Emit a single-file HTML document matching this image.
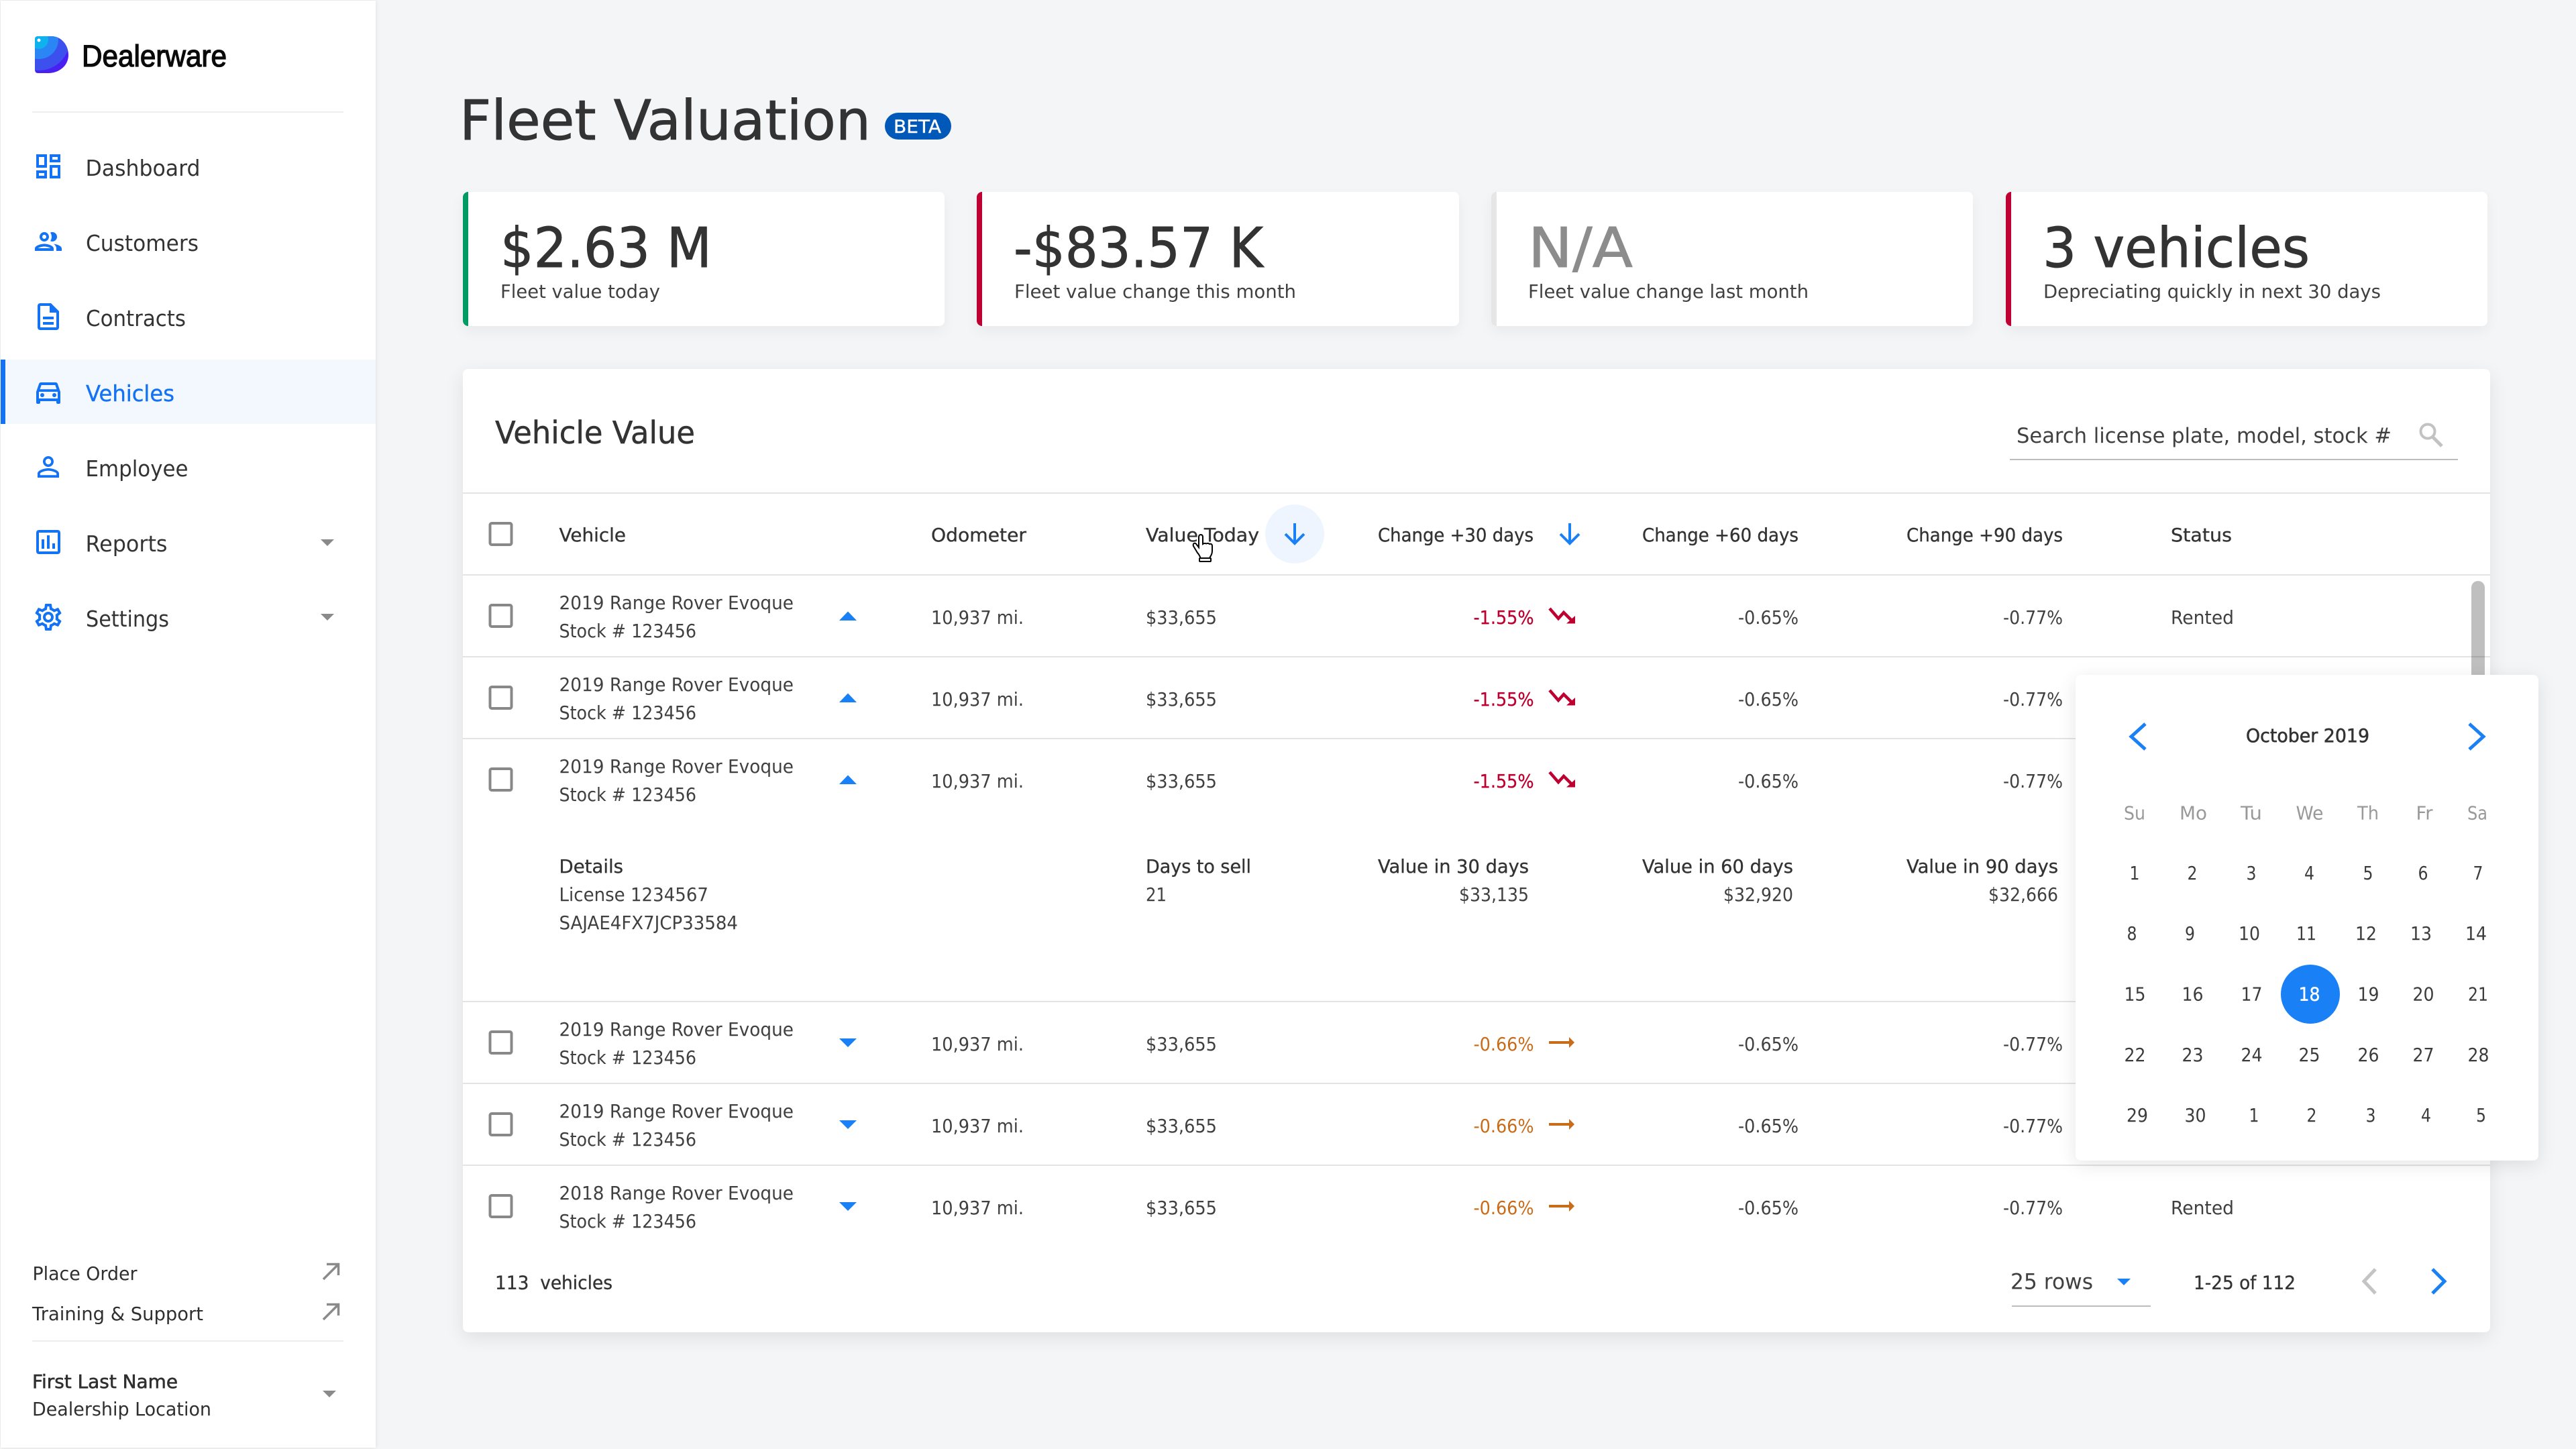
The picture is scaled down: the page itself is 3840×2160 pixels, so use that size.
<!DOCTYPE html>
<html lang="en">
<head>
<meta charset="utf-8">
<title>Fleet Valuation</title>
<style>
html,body{margin:0;padding:0;width:3840px;height:2160px;overflow:hidden;background:#f4f5f7}
.box{position:absolute;background:#fff;box-sizing:border-box}
#side{left:1px;top:1px;width:559px;height:2157px;box-shadow:0 0 6px rgba(0,0,0,.10)}
.kpi{top:286px;height:200px;width:718px;border-radius:8px;border-left:8px solid #009a63;box-shadow:0 8px 20px rgba(0,0,0,.05)}
#main{left:690px;top:550px;width:3022px;height:1436px;border-radius:8px;box-shadow:0 8px 28px rgba(0,0,0,.09)}
#cal{left:3094px;top:1006px;width:690px;height:724px;border-radius:8px;box-shadow:0 6px 28px rgba(0,0,0,.10)}
svg{position:absolute;left:0;top:0}
text{font-family:"DejaVu Sans","Liberation Sans",sans-serif;fill:#404040;font-size:28px}
.t{font-size:82px;fill:#333;stroke:#333;stroke-width:.9px}
.nav{font-size:33px;fill:#333}
.h{fill:#333;stroke:#333;stroke-width:.35px}
.sb{fill:#2f2f2f}
.g{fill:#999}
.s{fill:#bd0030;stroke:#bd0030;stroke-width:.3px}
.o{fill:#c96c1a}
.d{font-size:28px;fill:#3c3c3c;text-anchor:middle}
.w{font-size:28px;fill:#999;text-anchor:middle}
</style>
</head>
<body>
<div class="box" id="side"></div>
<div class="box kpi" style="left:690px"></div>
<div class="box kpi" style="left:1456px;width:719px;border-left-color:#bf0033"></div>
<div class="box kpi" style="left:2223px;border-left-color:#e6e6e6"></div>
<div class="box kpi" style="left:2990px;border-left-color:#bf0033"></div>
<div class="box" id="main"></div>

<svg width="3840" height="2160" viewBox="0 0 3840 2160" xmlns="http://www.w3.org/2000/svg">
<defs>
<clipPath id="lg"><path d="M57 54H76C92 54 102 68 102 82C102 98 88 109 72 109H57Q52 109 52 104V59Q52 54 57 54Z"/></clipPath>
<rect id="cb" x="730.5" y="-16" width="32" height="32" rx="2.5" fill="none" stroke="#888" stroke-width="4"/>
<polygon id="up" points="1251,7 1264,-6.5 1277,7" fill="#1a80f6"/>
<polygon id="dn" points="1251,-6 1277,-6 1264,7" fill="#1a80f6"/>
<g id="td" fill="none" stroke="#bd0030"><polyline points="2310,-11 2323,4 2331,-5 2342,6" stroke-width="4.5"/><polygon points="2348,0 2348,11.5 2335,11.5" fill="#bd0030" stroke="none"/></g>
<g id="tr" fill="#c96c1a"><rect x="2309" y="-2" width="31" height="4"/><polygon points="2339,-8 2347,0 2339,8"/></g>
<g id="ne" fill="none" stroke="#8a8a8a" stroke-width="3.5"><path d="M484 24L506 2M489 1.5H506.5V18"/></g>
<g id="car" fill="#8a8a8a"><polygon points="478,0 498,0 488,10"/></g>
</defs>

<!-- logo -->
<g clip-path="url(#lg)">
<rect x="50" y="50" width="56" height="64" fill="#4a1ff2"/>
<circle cx="58" cy="59" r="46" fill="#3c50ee"/>
<circle cx="58" cy="59" r="29" fill="#2a86f5"/>
<circle cx="58" cy="59" r="14" fill="#10b2ee"/>
<circle cx="58" cy="60" r="2.5" fill="#fff"/>
</g>
<text x="122" y="99" style="font-family:'Liberation Sans',sans-serif;font-size:45px;fill:#0a0a0a;stroke:#0a0a0a;stroke-width:1.3px" textLength="216" lengthAdjust="spacingAndGlyphs">Dealerware</text>
<rect x="48" y="166" width="464" height="2" fill="#eee"/>

<!-- nav -->
<rect x="1" y="536" width="559" height="96" fill="#f3f7fe"/>
<rect x="1" y="536" width="7" height="96" fill="#1473f2"/>
<g fill="#1473f2">
<path transform="translate(48,224) scale(2)" d="M19 5v2h-4V5h4M9 5v6H5V5h4m10 8v6h-4v-6h4M9 17v2H5v-2h4M21 3h-8v6h8V3zM11 3H3v10h8V3zm10 8h-8v10h8V11zm-10 4H3v6h8v-6z"/>
<path transform="translate(48,336) scale(2)" d="M9 13.75c-2.34 0-7 1.17-7 3.5V19h14v-1.75c0-2.33-4.66-3.5-7-3.5zM4.34 17c.84-.58 2.87-1.25 4.66-1.25s3.82.67 4.66 1.25H4.34zM9 12c1.93 0 3.5-1.57 3.5-3.5S10.93 5 9 5 5.5 6.57 5.5 8.5 7.07 12 9 12zm0-5c.83 0 1.5.67 1.5 1.5S9.83 10 9 10s-1.5-.67-1.5-1.5S8.17 7 9 7zm7.04 6.81c1.16.84 1.96 1.96 1.96 3.44V19h4v-1.75c0-2.02-3.5-3.17-5.96-3.44zM15 12c1.93 0 3.5-1.57 3.5-3.5S16.93 5 15 5c-.54 0-1.04.13-1.5.35.63.89 1 1.98 1 3.15s-.37 2.26-1 3.15c.46.22.96.35 1.5.35z"/>
<path transform="translate(48,448) scale(2)" d="M8 16h8v2H8zm0-4h8v2H8zm6-10H6c-1.1 0-2 .9-2 2v16c0 1.1.89 2 1.99 2H18c1.1 0 2-.9 2-2V8l-6-6zm4 18H6V4h7v5h5v11z"/>
<g transform="translate(48,560) scale(2)"><path d="M18.92 6.01C18.72 5.42 18.16 5 17.5 5h-11c-.66 0-1.21.42-1.42 1.01L3 12v8c0 .55.45 1 1 1h1c.55 0 1-.45 1-1v-1h12v1c0 .55.45 1 1 1h1c.55 0 1-.45 1-1v-8l-2.08-5.99zM6.85 7h10.29l1.08 3.11H5.77L6.85 7zM19 17H5v-5h14v5z"/><circle cx="7.5" cy="14.5" r="1.5"/><circle cx="16.5" cy="14.5" r="1.5"/></g>
<path transform="translate(48,672) scale(2)" d="M12 5.9c1.16 0 2.1.94 2.1 2.1s-.94 2.1-2.1 2.1S9.9 9.16 9.9 8s.94-2.1 2.1-2.1m0 9c2.97 0 6.1 1.46 6.1 2.1v1.1H5.9V17c0-.64 3.13-2.1 6.1-2.1M12 4C9.79 4 8 5.79 8 8s1.79 4 4 4 4-1.79 4-4-1.79-4-4-4zm0 9c-2.67 0-8 1.34-8 4v3h16v-3c0-2.66-5.33-4-8-4z"/>
<path transform="translate(48,784) scale(2)" d="M19 3H5c-1.1 0-2 .9-2 2v14c0 1.1.9 2 2 2h14c1.1 0 2-.9 2-2V5c0-1.1-.9-2-2-2zm0 16H5V5h14v14zM7 10h2v7H7zm4-3h2v10h-2zm4 6h2v4h-2z"/>
<path transform="translate(48,896) scale(2)" d="M19.43 12.98c.04-.32.07-.64.07-.98 0-.34-.03-.66-.07-.98l2.11-1.65c.19-.15.24-.42.12-.64l-2-3.46c-.09-.16-.26-.25-.44-.25-.06 0-.12.01-.17.03l-2.49 1c-.52-.4-1.08-.73-1.69-.98l-.38-2.65C14.46 2.18 14.25 2 14 2h-4c-.25 0-.46.18-.49.42l-.38 2.65c-.61.25-1.17.59-1.69.98l-2.49-1c-.06-.02-.12-.03-.18-.03-.17 0-.34.09-.43.25l-2 3.46c-.13.22-.07.49.12.64l2.11 1.65c-.04.32-.07.65-.07.98 0 .33.03.66.07.98l-2.11 1.65c-.19.15-.24.42-.12.64l2 3.46c.09.16.26.25.44.25.06 0 .12-.01.17-.03l2.49-1c.52.4 1.08.73 1.69.98l.38 2.65c.03.24.24.42.49.42h4c.25 0 .46-.18.49-.42l.38-2.65c.61-.25 1.17-.59 1.69-.98l2.49 1c.06.02.12.03.18.03.17 0 .34-.09.43-.25l2-3.46c.12-.22.07-.49-.12-.64l-2.11-1.65zm-1.98-1.71c.04.31.05.52.05.73 0 .21-.02.43-.05.73l-.14 1.13.89.7 1.08.84-.7 1.21-1.27-.51-1.04-.42-.9.68c-.43.32-.84.56-1.25.73l-1.06.43-.16 1.13-.2 1.35h-1.4l-.19-1.35-.16-1.13-1.06-.43c-.43-.18-.83-.41-1.23-.71l-.91-.7-1.06.43-1.27.51-.7-1.21 1.08-.84.89-.7-.14-1.13c-.03-.31-.05-.54-.05-.74s.02-.43.05-.73l.14-1.13-.89-.7-1.08-.84.7-1.21 1.27.51 1.04.42.9-.68c.43-.32.84-.56 1.25-.73l1.06-.43.16-1.13.2-1.35h1.39l.19 1.35.16 1.13 1.06.43c.43.18.83.41 1.23.71l.91.7 1.06-.43 1.27-.51.7 1.21-1.07.85-.89.7.14 1.13zM12 8c-2.21 0-4 1.79-4 4s1.79 4 4 4 4-1.79 4-4-1.79-4-4-4zm0 6c-1.1 0-2-.9-2-2s.9-2 2-2 2 .9 2 2-.9 2-2 2z"/>
</g>
<text class="nav" x="127.5" y="262" textLength="171" lengthAdjust="spacingAndGlyphs">Dashboard</text>
<text class="nav" x="128" y="374" textLength="168" lengthAdjust="spacingAndGlyphs">Customers</text>
<text class="nav" x="128" y="486" textLength="149" lengthAdjust="spacingAndGlyphs">Contracts</text>
<text class="nav" x="128" y="598" textLength="132" lengthAdjust="spacingAndGlyphs" style="fill:#1473f2;stroke:#1473f2;stroke-width:.4px">Vehicles</text>
<text class="nav" x="127.5" y="710" textLength="153" lengthAdjust="spacingAndGlyphs">Employee</text>
<text class="nav" x="127.5" y="822" textLength="122" lengthAdjust="spacingAndGlyphs">Reports</text>
<text class="nav" x="128" y="934" textLength="124" lengthAdjust="spacingAndGlyphs">Settings</text>
<use href="#car" y="804"/>
<use href="#car" y="915"/>

<!-- sidebar bottom -->
<text class="sb" x="48.5" y="1908" textLength="156" lengthAdjust="spacingAndGlyphs">Place Order</text>
<text class="sb" x="48" y="1968" textLength="255" lengthAdjust="spacingAndGlyphs">Training &amp; Support</text>
<use href="#ne" x="-2" y="1883"/>
<use href="#ne" x="-2" y="1943"/>
<rect x="48" y="1998" width="464" height="2" fill="#eee"/>
<text class="sb" x="48" y="2069" textLength="217" lengthAdjust="spacingAndGlyphs" style="stroke:#2f2f2f;stroke-width:.6px">First Last Name</text>
<text class="sb" x="48" y="2110" textLength="267" lengthAdjust="spacingAndGlyphs">Dealership Location</text>
<use href="#car" x="3" y="2073"/>

<!-- title -->
<text class="t" x="685" y="208" textLength="613" lengthAdjust="spacingAndGlyphs">Fleet Valuation</text>
<rect x="1319" y="168" width="99" height="40" rx="20" fill="#0058b8"/>
<text x="1332" y="198" textLength="71" lengthAdjust="spacingAndGlyphs" style="font-size:27px;fill:#fff;stroke:#fff;stroke-width:.4px">BETA</text>

<!-- KPI -->
<text class="t" x="746" y="398" textLength="315" lengthAdjust="spacingAndGlyphs">$2.63 M</text>
<text x="746" y="444" textLength="238" lengthAdjust="spacingAndGlyphs">Fleet value today</text>
<text class="t" x="1511" y="398" textLength="372" lengthAdjust="spacingAndGlyphs">-$83.57 K</text>
<text x="1512" y="444" textLength="420" lengthAdjust="spacingAndGlyphs">Fleet value change this month</text>
<text class="t" x="2278" y="398" textLength="156" lengthAdjust="spacingAndGlyphs" style="fill:#8c8c8c;stroke:#8c8c8c">N/A</text>
<text x="2278" y="444" textLength="418" lengthAdjust="spacingAndGlyphs">Fleet value change last month</text>
<text class="t" x="3045" y="398" textLength="398" lengthAdjust="spacingAndGlyphs">3 vehicles</text>
<text x="3046" y="444" textLength="503" lengthAdjust="spacingAndGlyphs">Depreciating quickly in next 30 days</text>

<!-- table head -->
<text x="738" y="661" textLength="298" lengthAdjust="spacingAndGlyphs" style="font-size:46px;fill:#333;stroke:#333;stroke-width:.5px">Vehicle Value</text>
<text x="3006" y="660" textLength="559" lengthAdjust="spacingAndGlyphs" style="font-size:31px">Search license plate, model, stock #</text>
<circle cx="3619" cy="643" r="10.5" fill="none" stroke="#c2c2c2" stroke-width="4"/>
<path d="M3627 652L3640 665" stroke="#c2c2c2" stroke-width="5" fill="none"/>
<rect x="2996" y="684" width="668" height="2" fill="#bdbdbd"/>

<g fill="#e3e3e3">
<rect x="690" y="734" width="3022" height="2"/>
<rect x="690" y="856" width="3022" height="2"/>
<rect x="690" y="978" width="3022" height="2"/>
<rect x="690" y="1100" width="3022" height="2"/>
<rect x="690" y="1492" width="3022" height="2"/>
<rect x="690" y="1614" width="3022" height="2"/>
<rect x="690" y="1736" width="3022" height="2"/>
</g>
<use href="#cb" y="796"/>
<text class="h" x="833.5" y="807" textLength="99.5" lengthAdjust="spacingAndGlyphs">Vehicle</text>
<text class="h" x="1388" y="807" textLength="142" lengthAdjust="spacingAndGlyphs">Odometer</text>
<text class="h" x="1708" y="807" textLength="169" lengthAdjust="spacingAndGlyphs">Value Today</text>
<circle cx="1930" cy="796" r="44" fill="#eef5fe"/>
<path d="M1930 780V810M1916 796L1930 810L1944 796" fill="none" stroke="#1a80f6" stroke-width="4"/>
<text class="h" x="2054" y="807" textLength="232" lengthAdjust="spacingAndGlyphs">Change +30 days</text>
<path d="M2340 780V810M2326 796L2340 810L2354 796" fill="none" stroke="#1a80f6" stroke-width="4"/>
<text class="h" x="2448" y="807" textLength="233" lengthAdjust="spacingAndGlyphs">Change +60 days</text>
<text class="h" x="2842" y="807" textLength="233" lengthAdjust="spacingAndGlyphs">Change +90 days</text>
<text class="h" x="3236" y="807" textLength="91" lengthAdjust="spacingAndGlyphs">Status</text>

<!-- row 1 -->
<use href="#cb" y="918"/><use href="#up" y="918"/><use href="#td" y="918"/>
<text x="833.5" y="908" textLength="349.5" lengthAdjust="spacingAndGlyphs">2019 Range Rover Evoque</text>
<text x="833.5" y="950" textLength="204.5" lengthAdjust="spacingAndGlyphs">Stock # 123456</text>
<text x="1388" y="930" textLength="138" lengthAdjust="spacingAndGlyphs">10,937 mi.</text>
<text x="1708" y="930" textLength="106" lengthAdjust="spacingAndGlyphs">$33,655</text>
<text class="s" x="2196.5" y="930" textLength="90" lengthAdjust="spacingAndGlyphs">-1.55%</text>
<text x="2591" y="930" textLength="90" lengthAdjust="spacingAndGlyphs">-0.65%</text>
<text x="2986" y="930" textLength="89" lengthAdjust="spacingAndGlyphs">-0.77%</text>
<text x="3236" y="930" textLength="94" lengthAdjust="spacingAndGlyphs">Rented</text>
<!-- row 2 -->
<use href="#cb" y="1040"/><use href="#up" y="1040"/><use href="#td" y="1040"/>
<text x="833.5" y="1030" textLength="349.5" lengthAdjust="spacingAndGlyphs">2019 Range Rover Evoque</text>
<text x="833.5" y="1072" textLength="204.5" lengthAdjust="spacingAndGlyphs">Stock # 123456</text>
<text x="1388" y="1052" textLength="138" lengthAdjust="spacingAndGlyphs">10,937 mi.</text>
<text x="1708" y="1052" textLength="106" lengthAdjust="spacingAndGlyphs">$33,655</text>
<text class="s" x="2196.5" y="1052" textLength="90" lengthAdjust="spacingAndGlyphs">-1.55%</text>
<text x="2591" y="1052" textLength="90" lengthAdjust="spacingAndGlyphs">-0.65%</text>
<text x="2986" y="1052" textLength="89" lengthAdjust="spacingAndGlyphs">-0.77%</text>
<!-- row 3 -->
<use href="#cb" y="1162"/><use href="#up" y="1162"/><use href="#td" y="1162"/>
<text x="833.5" y="1152" textLength="349.5" lengthAdjust="spacingAndGlyphs">2019 Range Rover Evoque</text>
<text x="833.5" y="1194" textLength="204.5" lengthAdjust="spacingAndGlyphs">Stock # 123456</text>
<text x="1388" y="1174" textLength="138" lengthAdjust="spacingAndGlyphs">10,937 mi.</text>
<text x="1708" y="1174" textLength="106" lengthAdjust="spacingAndGlyphs">$33,655</text>
<text class="s" x="2196.5" y="1174" textLength="90" lengthAdjust="spacingAndGlyphs">-1.55%</text>
<text x="2591" y="1174" textLength="90" lengthAdjust="spacingAndGlyphs">-0.65%</text>
<text x="2986" y="1174" textLength="89" lengthAdjust="spacingAndGlyphs">-0.77%</text>
<!-- details -->
<text class="h" x="833.5" y="1301" textLength="95.5" lengthAdjust="spacingAndGlyphs">Details</text>
<text x="833.5" y="1343" textLength="222.5" lengthAdjust="spacingAndGlyphs">License 1234567</text>
<text x="833.5" y="1385" textLength="266.5" lengthAdjust="spacingAndGlyphs">SAJAE4FX7JCP33584</text>
<text class="h" x="1708" y="1301" textLength="157" lengthAdjust="spacingAndGlyphs">Days to sell</text>
<text x="1708" y="1343" textLength="31" lengthAdjust="spacingAndGlyphs">21</text>
<text class="h" x="2054" y="1301" textLength="225" lengthAdjust="spacingAndGlyphs">Value in 30 days</text>
<text x="2175" y="1343" textLength="104" lengthAdjust="spacingAndGlyphs">$33,135</text>
<text class="h" x="2448" y="1301" textLength="225" lengthAdjust="spacingAndGlyphs">Value in 60 days</text>
<text x="2569" y="1343" textLength="104" lengthAdjust="spacingAndGlyphs">$32,920</text>
<text class="h" x="2842" y="1301" textLength="226" lengthAdjust="spacingAndGlyphs">Value in 90 days</text>
<text x="2964" y="1343" textLength="104" lengthAdjust="spacingAndGlyphs">$32,666</text>
<!-- row 4 -->
<use href="#cb" y="1554"/><use href="#dn" y="1554"/><use href="#tr" y="1554"/>
<text x="833.5" y="1544" textLength="349.5" lengthAdjust="spacingAndGlyphs">2019 Range Rover Evoque</text>
<text x="833.5" y="1586" textLength="204.5" lengthAdjust="spacingAndGlyphs">Stock # 123456</text>
<text x="1388" y="1566" textLength="138" lengthAdjust="spacingAndGlyphs">10,937 mi.</text>
<text x="1708" y="1566" textLength="106" lengthAdjust="spacingAndGlyphs">$33,655</text>
<text class="o" x="2196.5" y="1566" textLength="90" lengthAdjust="spacingAndGlyphs">-0.66%</text>
<text x="2591" y="1566" textLength="90" lengthAdjust="spacingAndGlyphs">-0.65%</text>
<text x="2986" y="1566" textLength="89" lengthAdjust="spacingAndGlyphs">-0.77%</text>
<!-- row 5 -->
<use href="#cb" y="1676"/><use href="#dn" y="1676"/><use href="#tr" y="1676"/>
<text x="833.5" y="1666" textLength="349.5" lengthAdjust="spacingAndGlyphs">2019 Range Rover Evoque</text>
<text x="833.5" y="1708" textLength="204.5" lengthAdjust="spacingAndGlyphs">Stock # 123456</text>
<text x="1388" y="1688" textLength="138" lengthAdjust="spacingAndGlyphs">10,937 mi.</text>
<text x="1708" y="1688" textLength="106" lengthAdjust="spacingAndGlyphs">$33,655</text>
<text class="o" x="2196.5" y="1688" textLength="90" lengthAdjust="spacingAndGlyphs">-0.66%</text>
<text x="2591" y="1688" textLength="90" lengthAdjust="spacingAndGlyphs">-0.65%</text>
<text x="2986" y="1688" textLength="89" lengthAdjust="spacingAndGlyphs">-0.77%</text>
<!-- row 6 -->
<use href="#cb" y="1798"/><use href="#dn" y="1798"/><use href="#tr" y="1798"/>
<text x="833.5" y="1788" textLength="349.5" lengthAdjust="spacingAndGlyphs">2018 Range Rover Evoque</text>
<text x="833.5" y="1830" textLength="204.5" lengthAdjust="spacingAndGlyphs">Stock # 123456</text>
<text x="1388" y="1810" textLength="138" lengthAdjust="spacingAndGlyphs">10,937 mi.</text>
<text x="1708" y="1810" textLength="106" lengthAdjust="spacingAndGlyphs">$33,655</text>
<text class="o" x="2196.5" y="1810" textLength="90" lengthAdjust="spacingAndGlyphs">-0.66%</text>
<text x="2591" y="1810" textLength="90" lengthAdjust="spacingAndGlyphs">-0.65%</text>
<text x="2986" y="1810" textLength="89" lengthAdjust="spacingAndGlyphs">-0.77%</text>
<text x="3236" y="1810" textLength="94" lengthAdjust="spacingAndGlyphs">Rented</text>

<!-- footer -->
<text class="h" x="738" y="1921.5" textLength="175" lengthAdjust="spacingAndGlyphs" xml:space="preserve">113  vehicles</text>
<text x="2997" y="1921.5" textLength="123" lengthAdjust="spacingAndGlyphs" style="font-size:32px">25 rows</text>
<polygon points="3156,1906 3176,1906 3166,1916" fill="#1a80f6"/>
<rect x="2999" y="1946" width="207" height="2" fill="#bdbdbd"/>
<text class="h" x="3270" y="1921.5" textLength="152" lengthAdjust="spacingAndGlyphs">1-25 of 112</text>
<path d="M3541 1892L3524 1910L3541 1928" fill="none" stroke="#c4c4c4" stroke-width="5"/>
<path d="M3626 1892L3644 1910L3626 1928" fill="none" stroke="#1a80f6" stroke-width="5"/>

<!-- scrollbar -->
<rect x="3684" y="866" width="20" height="260" rx="10" fill="#000" fill-opacity=".25"/>

<!-- pointer -->
<g>
<path d="M1787 812V801q0-4 3-4t3 4v10q3-2 5-.5q3-1.5 5 .5q4-1 4 3v7q0 5-3 9l-1 3h-13q-2-6-5-9l-6-10q-1-3 1-4q2-1 4 2l3 4z" fill="#fff" stroke="#000" stroke-width="2"/>
<rect x="1788" y="832" width="17" height="5" rx="1" fill="#fff" stroke="#000" stroke-width="2"/>
</g>
</svg>

<div class="box" id="cal"></div>

<svg width="3840" height="2160" viewBox="0 0 3840 2160" xmlns="http://www.w3.org/2000/svg">
<path d="M3198 1079L3177 1098L3198 1117" fill="none" stroke="#1a80f6" stroke-width="5"/>
<path d="M3681 1079L3702 1098L3681 1117" fill="none" stroke="#1a80f6" stroke-width="5"/>
<text class="h" x="3348" y="1106" textLength="184" lengthAdjust="spacingAndGlyphs" style="stroke-width:.6px">October 2019</text>
<text class="w" x="3182" y="1221.5" textLength="32" lengthAdjust="spacingAndGlyphs">Su</text>
<text class="w" x="3269.5" y="1221.5" textLength="41" lengthAdjust="spacingAndGlyphs">Mo</text>
<text class="w" x="3356" y="1221.5" textLength="32" lengthAdjust="spacingAndGlyphs">Tu</text>
<text class="w" x="3443" y="1221.5" textLength="41" lengthAdjust="spacingAndGlyphs">We</text>
<text class="w" x="3530" y="1221.5" textLength="32" lengthAdjust="spacingAndGlyphs">Th</text>
<text class="w" x="3614" y="1221.5" textLength="25" lengthAdjust="spacingAndGlyphs">Fr</text>
<text class="w" x="3693" y="1221.5" textLength="30" lengthAdjust="spacingAndGlyphs">Sa</text>

<text class="d" x="3182" y="1311" textLength="15" lengthAdjust="spacingAndGlyphs">1</text>
<text class="d" x="3268" y="1311" textLength="15" lengthAdjust="spacingAndGlyphs">2</text>
<text class="d" x="3356" y="1311" textLength="15" lengthAdjust="spacingAndGlyphs">3</text>
<text class="d" x="3442.5" y="1311" textLength="15" lengthAdjust="spacingAndGlyphs">4</text>
<text class="d" x="3530" y="1311" textLength="15" lengthAdjust="spacingAndGlyphs">5</text>
<text class="d" x="3612" y="1311" textLength="15" lengthAdjust="spacingAndGlyphs">6</text>
<text class="d" x="3694" y="1311" textLength="15" lengthAdjust="spacingAndGlyphs">7</text>

<text class="d" x="3178" y="1401" textLength="15" lengthAdjust="spacingAndGlyphs">8</text>
<text class="d" x="3264.5" y="1401" textLength="15" lengthAdjust="spacingAndGlyphs">9</text>
<text class="d" x="3353" y="1401" textLength="32" lengthAdjust="spacingAndGlyphs">10</text>
<text class="d" x="3438" y="1401" textLength="30" lengthAdjust="spacingAndGlyphs">11</text>
<text class="d" x="3527" y="1401" textLength="32" lengthAdjust="spacingAndGlyphs">12</text>
<text class="d" x="3609" y="1401" textLength="32" lengthAdjust="spacingAndGlyphs">13</text>
<text class="d" x="3691" y="1401" textLength="32" lengthAdjust="spacingAndGlyphs">14</text>

<circle cx="3444" cy="1482" r="44" fill="#1a80f6"/>
<text class="d" x="3182.5" y="1491.5" textLength="32" lengthAdjust="spacingAndGlyphs">15</text>
<text class="d" x="3268.5" y="1491.5" textLength="32" lengthAdjust="spacingAndGlyphs">16</text>
<text class="d" x="3356.5" y="1491.5" textLength="32" lengthAdjust="spacingAndGlyphs">17</text>
<text class="d" x="3442.5" y="1491.5" textLength="32" lengthAdjust="spacingAndGlyphs" style="fill:#fff;stroke:#fff;stroke-width:.4px">18</text>
<text class="d" x="3530.5" y="1491.5" textLength="32" lengthAdjust="spacingAndGlyphs">19</text>
<text class="d" x="3612.5" y="1491.5" textLength="32" lengthAdjust="spacingAndGlyphs">20</text>
<text class="d" x="3694" y="1491.5" textLength="30" lengthAdjust="spacingAndGlyphs">21</text>

<text class="d" x="3182.5" y="1582" textLength="32" lengthAdjust="spacingAndGlyphs">22</text>
<text class="d" x="3268.5" y="1582" textLength="32" lengthAdjust="spacingAndGlyphs">23</text>
<text class="d" x="3356.5" y="1582" textLength="32" lengthAdjust="spacingAndGlyphs">24</text>
<text class="d" x="3442.5" y="1582" textLength="32" lengthAdjust="spacingAndGlyphs">25</text>
<text class="d" x="3530.5" y="1582" textLength="32" lengthAdjust="spacingAndGlyphs">26</text>
<text class="d" x="3612.5" y="1582" textLength="32" lengthAdjust="spacingAndGlyphs">27</text>
<text class="d" x="3694.5" y="1582" textLength="32" lengthAdjust="spacingAndGlyphs">28</text>

<text class="d" x="3186" y="1672" textLength="32" lengthAdjust="spacingAndGlyphs">29</text>
<text class="d" x="3272.5" y="1672" textLength="32" lengthAdjust="spacingAndGlyphs">30</text>
<text class="d" x="3360" y="1672" textLength="15" lengthAdjust="spacingAndGlyphs">1</text>
<text class="d" x="3446" y="1672" textLength="15" lengthAdjust="spacingAndGlyphs">2</text>
<text class="d" x="3534" y="1672" textLength="15" lengthAdjust="spacingAndGlyphs">3</text>
<text class="d" x="3616.5" y="1672" textLength="15" lengthAdjust="spacingAndGlyphs">4</text>
<text class="d" x="3698.5" y="1672" textLength="15" lengthAdjust="spacingAndGlyphs">5</text>
</svg>
</body>
</html>
